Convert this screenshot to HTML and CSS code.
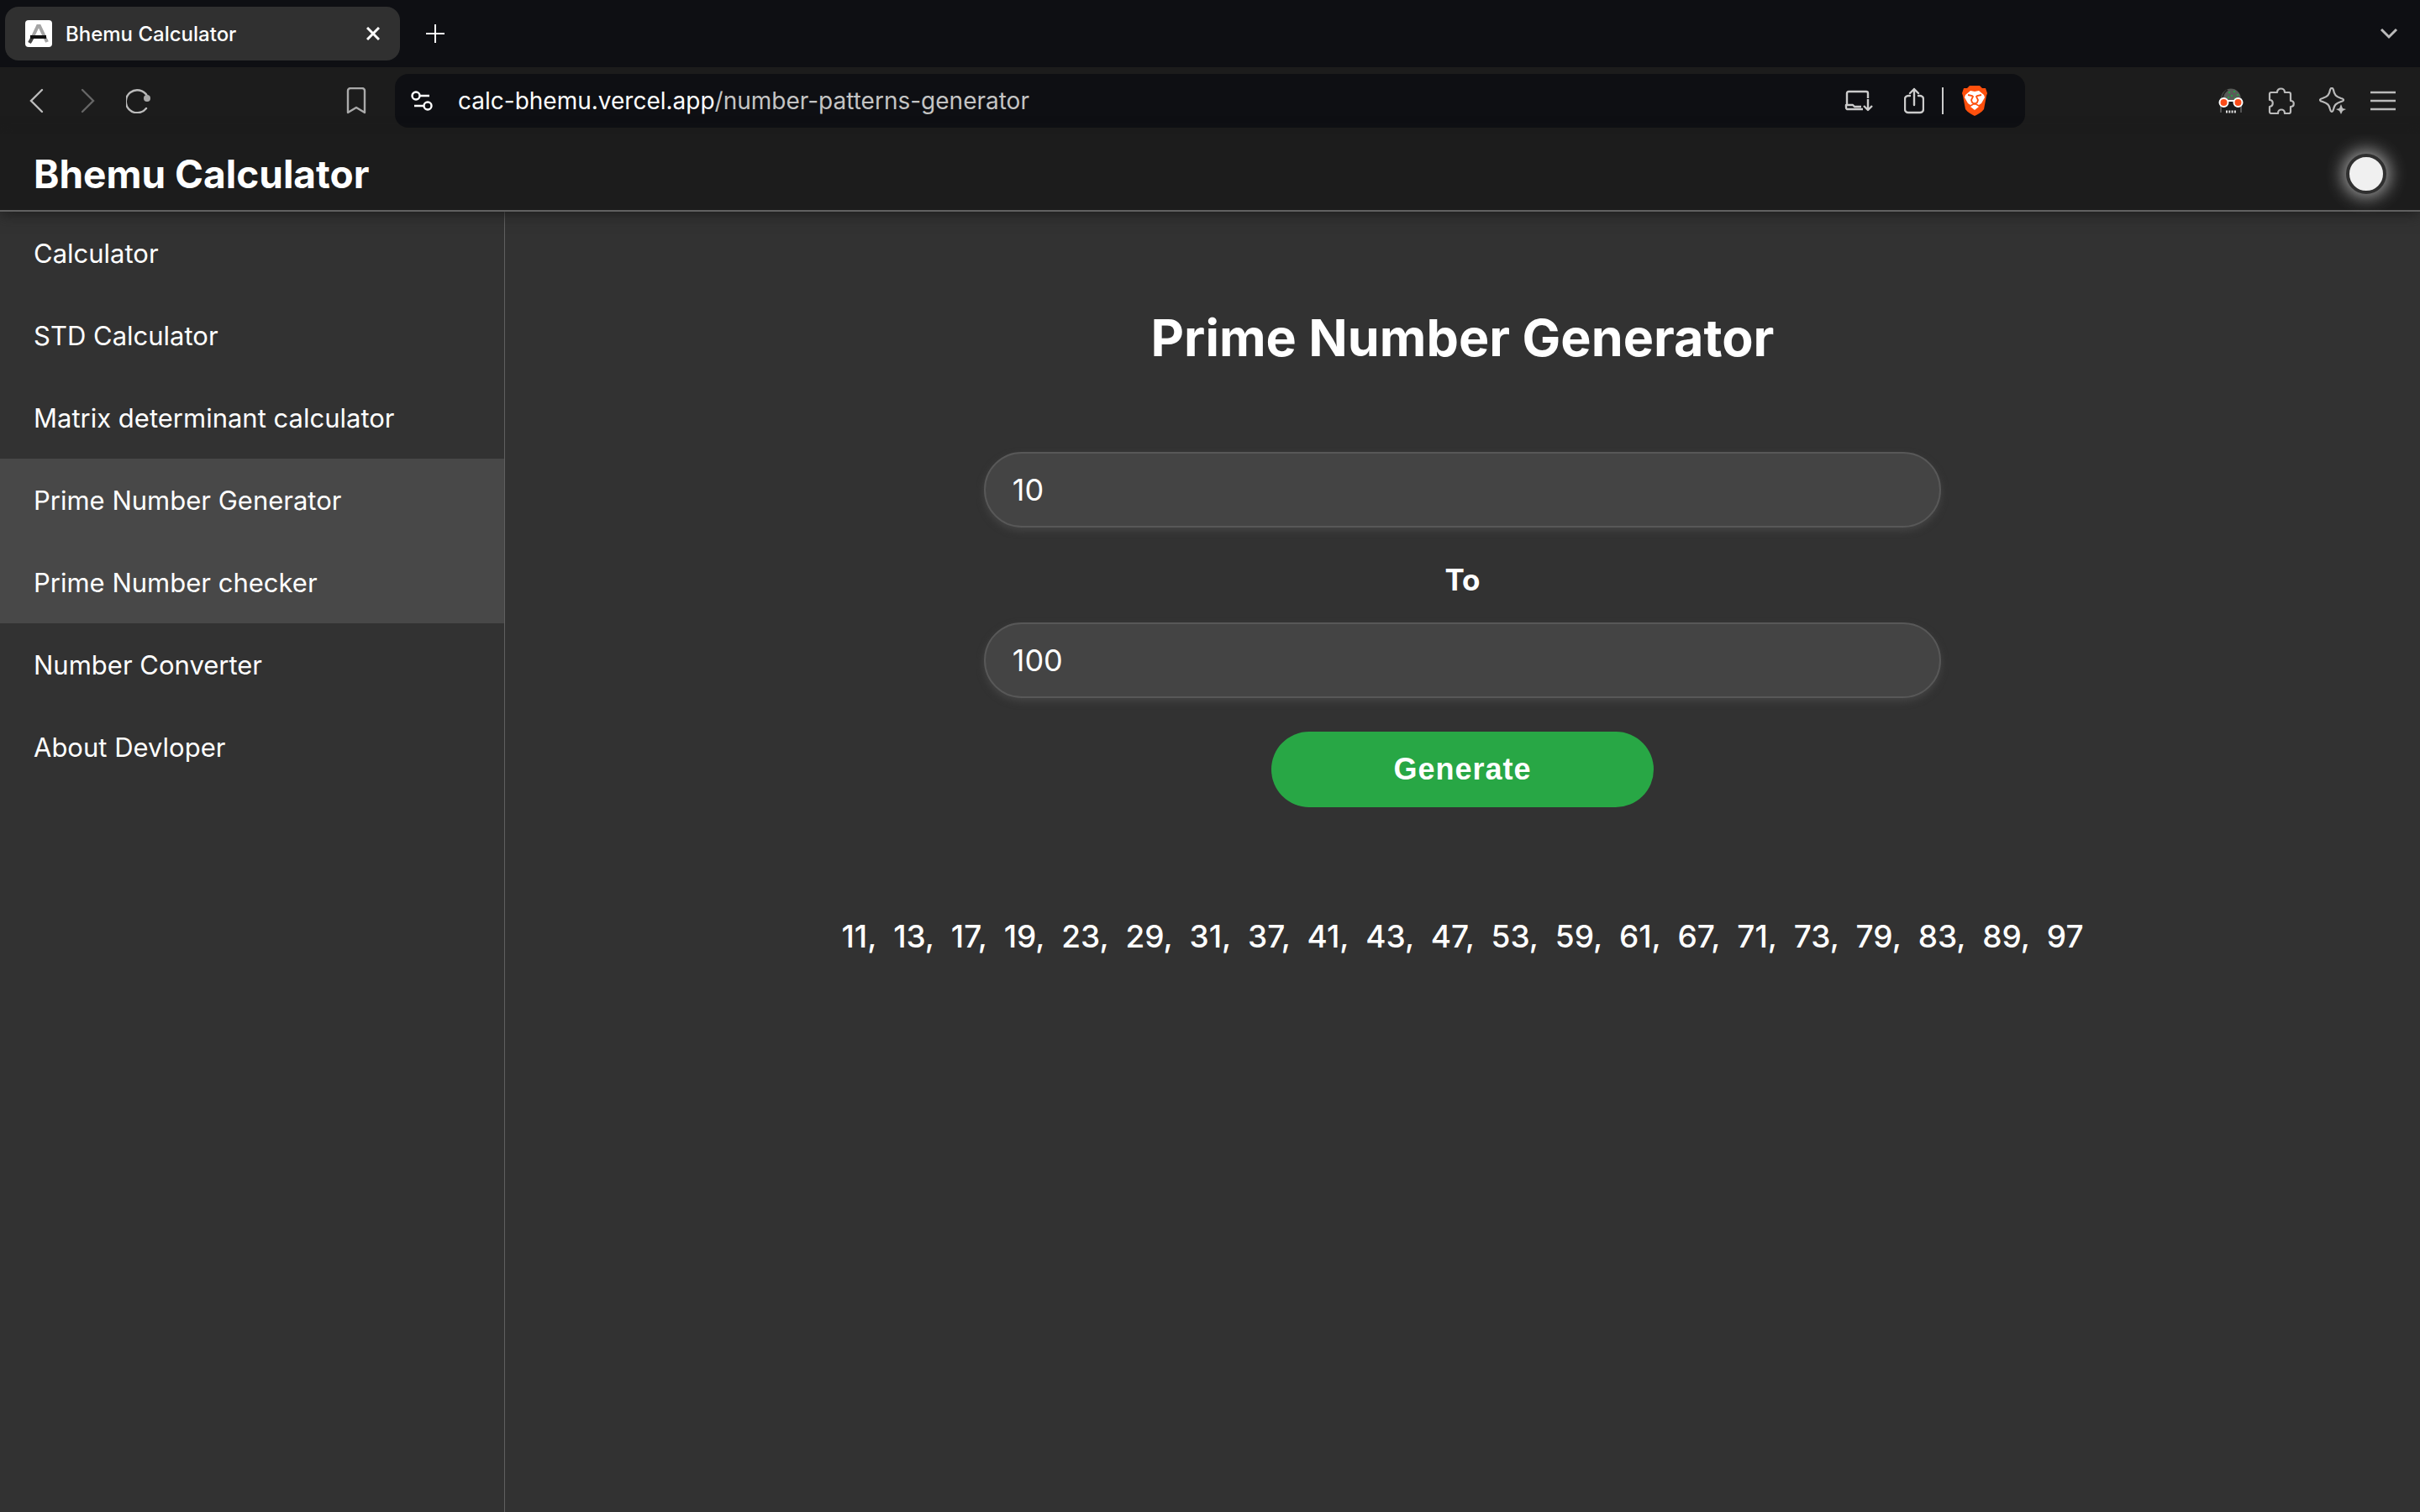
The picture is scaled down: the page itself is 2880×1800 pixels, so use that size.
FILE: index.html
```html
<!DOCTYPE html>
<html lang="en">
<head>
<meta charset="utf-8">
<title>Bhemu Calculator</title>
<link rel="stylesheet" href="styles.css">
</head>
<body>
<div class="tab-strip">
  <div class="tab">
    <svg class="favicon" width="32" height="32" viewBox="0 0 32 32" aria-hidden="true">
      <rect width="32" height="32" rx="4" fill="#fff"/>
      <path d="M6 26 15 7h2l9 19" fill="none" stroke="#a4a4a4" stroke-width="4"/>
      <path d="M5 27 9 20" stroke="#444" stroke-width="4"/>
      <path d="M6 18h19v4H6z" fill="#111"/>
    </svg>
    <span class="tab-title">Bhemu Calculator</span>
    <button class="icon-button" aria-label="Close tab">
      <svg width="16" height="16" viewBox="0 0 16 16"><path d="m1 1 14 14M15 1 1 15" stroke="#fff" stroke-width="3"/></svg>
    </button>
  </div>
  <button class="icon-button new-tab" aria-label="New tab">
    <svg width="22" height="22" viewBox="0 0 22 22"><path d="M11 0v22M0 11h22" stroke="#fff" stroke-width="2"/></svg>
  </button>
  <button class="icon-button tab-search" aria-label="Search tabs">
    <svg width="22" height="14" viewBox="0 0 22 14"><path d="m2 2 9 9 9-9" fill="none" stroke="#bbb" stroke-width="3"/></svg>
  </button>
</div>

<div class="toolbar">
  <div class="toolbar-side">
    <button class="icon-button" aria-label="Back">
      <svg width="30" height="30" viewBox="0 0 30 30"><path d="M20 2 7 15l13 13" fill="none" stroke="#bbb" stroke-width="2.4" stroke-linecap="round"/></svg>
    </button>
    <button class="icon-button" aria-label="Forward">
      <svg width="30" height="30" viewBox="0 0 30 30"><path d="m8 2 13 13L8 28" fill="none" stroke="#666" stroke-width="2.4" stroke-linecap="round"/></svg>
    </button>
    <button class="icon-button" aria-label="Reload">
      <svg width="30" height="30" viewBox="0 0 30 30"><path d="M24 24A13.500 13.500 0 1 1 25 9" fill="none" stroke="#bbb" stroke-width="2.400" stroke-linecap="round"/><circle cx="25" cy="12" r="4" fill="#aaa"/></svg>
    </button>
    <button class="icon-button bookmark" aria-label="Bookmark this tab">
      <svg width="24" height="32" viewBox="0 0 24 32"><path d="M2 4a3 3 0 0 1 3-3h14a3 3 0 0 1 3 3v26l-10-6-10 6z" fill="none" stroke="#aaa" stroke-width="2.400" stroke-linejoin="round"/></svg>
    </button>
  </div>
  <div class="address-bar">
    <button class="icon-button" aria-label="Site settings">
      <svg width="26" height="26" viewBox="0 0 26 26" fill="none" stroke="#fff" stroke-width="2.400"><circle cx="6" cy="7" r="4.500"/><path d="M11 7h11M4 19h11"/><circle cx="20" cy="19" r="4.500"/></svg>
    </button>
    <span class="address">calc-bhemu.vercel.app<span class="address-path">/number-patterns-generator</span></span>
    <div class="address-actions">
      <button class="icon-button" aria-label="Install app">
        <svg width="34" height="28" viewBox="0 0 34 28" fill="none" stroke="#ccc" stroke-width="2.400"><path d="M3 19V5a2 2 0 0 1 2-2h21a2 2 0 0 1 2 2v6M22 24H3a2 2 0 0 1-1-2v-3h8l2 2h8M28 12v12M23 20l5 5 5-5" stroke-linejoin="round"/></svg>
      </button>
      <button class="icon-button share" aria-label="Share">
        <svg width="24" height="32" viewBox="0 0 24 32" fill="none" stroke="#ccc" stroke-width="2.400" stroke-linecap="round" stroke-linejoin="round"><path d="M7 10H5a4 4 0 0 0-4 4v12a4 4 0 0 0 4 4h14a4 4 0 0 0 4-4V14a4 4 0 0 0-4-4h-2M12 21V2M7 7l5-5 5 5"/></svg>
      </button>
      <span class="divider"></span>
      <button class="icon-button" aria-label="Brave Shields">
        <svg width="32" height="36" viewBox="0 0 32 36"><path d="M10 0h12l3 3h4l2 6-1 3-3 16c-3 4-7 6-11 8-4-2-8-4-11-8L2 12 1 9l2-6h4z" fill="#ff500d"/><path d="m16 7 5-1 6 5 1 3-4 7-3 2-5-3-5 3-3-2-4-7 1-3 6-5z" fill="#fff"/><path d="m16 22 5 3-5 4-5-4z" fill="#fff"/><path d="m8 11 5 1 1 1-2 4 1 3 3 2 3-2 1-3-2-4 1-1 5-1" fill="none" stroke="#ff500d" stroke-width="1.800"/></svg>
      </button>
    </div>
  </div>
  <div class="toolbar-side toolbar-end">
    <button class="icon-button" aria-label="Private search extension">
      <svg width="30" height="30" viewBox="0 0 30 30"><path d="M3 14C3-4 27-4 27 14z" fill="#585c58"/><path d="M3 12v17M27 12v17" stroke="#555" stroke-width="2"/><path d="M5 11C6 6 8 4 11 2" stroke="#222" stroke-width="2" fill="none"/><path d="M12 5h2M18 4h2M15 9h2M22 8h2M19 12h2M11 11h2" stroke="#2a9c45" stroke-width="2"/><circle cx="6.500" cy="17" r="5" fill="#fb4b18" stroke="#fff" stroke-width="2"/><circle cx="23.500" cy="17" r="5" fill="#fb4b18" stroke="#fff" stroke-width="2"/><path d="M11 15h8" stroke="#fff" stroke-width="2"/><path d="M9 28h12" stroke="#ddd" stroke-width="3" stroke-dasharray="2 1.300"/></svg>
    </button>
    <button class="icon-button" aria-label="Extensions">
      <svg width="32" height="32" viewBox="0 0 32 32"><path d="M2 8a2 2 0 0 1 2-2h7c0-6 9-6 9 0h5a2 2 0 0 1 2 2v8c5 0 5 7 0 7v6a2 2 0 0 1-2 2h-5c0-6-8-6-8 0H4a2 2 0 0 1-2-2v-6c5-1 5-8 0-8z" fill="none" stroke="#bbb" stroke-width="2.200" stroke-linejoin="round"/></svg>
    </button>
    <button class="icon-button" aria-label="Leo AI">
      <svg width="32" height="32" viewBox="0 0 32 32"><path d="M13 3c1-3 3-3 4 0 1 6 3 8 9 10 4 1 4 3 0 4-6 2-8 4-9 9-1 4-3 4-4 0-1-5-3-7-9-9-4-1-4-3 0-4 6-2 8-4 9-10z" fill="none" stroke="#bbb" stroke-width="2.200"/><path d="m26 20 2 5 4 1-4 2-2 4-2-4-4-2 4-1z" fill="#bbb"/></svg>
    </button>
    <button class="icon-button" aria-label="Menu">
      <svg width="30" height="30" viewBox="0 0 30 30"><path d="M0 5h30M0 15h30M0 25h30" stroke="#bbb" stroke-width="2.400"/></svg>
    </button>
  </div>
</div>

<header class="app-header">
  <h1 class="brand">Bhemu Calculator</h1>
  <button class="theme-toggle" aria-label="Toggle theme"></button>
</header>

<div class="layout">
  <nav class="sidebar">
    <a class="nav-link" href="#calculator">Calculator</a>
    <a class="nav-link" href="#std">STD Calculator</a>
    <a class="nav-link" href="#matrix">Matrix determinant calculator</a>
    <a class="nav-link active" href="#prime-generator">Prime Number Generator</a>
    <a class="nav-link active" href="#prime-checker">Prime Number checker</a>
    <a class="nav-link" href="#converter">Number Converter</a>
    <a class="nav-link" href="#about">About Devloper</a>
  </nav>
  <main class="content">
    <h2 class="title">Prime Number Generator</h2>
    <form class="range-form">
      <input class="field" type="text" value="10" aria-label="From">
      <label class="to-label" for="range-end">To</label>
      <input class="field" id="range-end" type="text" value="100">
      <button class="generate" type="button">Generate</button>
    </form>
    <p class="results">11,&nbsp; 13,&nbsp; 17,&nbsp; 19,&nbsp; 23,&nbsp; 29,&nbsp; 31,&nbsp; 37,&nbsp; 41,&nbsp; 43,&nbsp; 47,&nbsp; 53,&nbsp; 59,&nbsp; 61,&nbsp; 67,&nbsp; 71,&nbsp; 73,&nbsp; 79,&nbsp; 83,&nbsp; 89,&nbsp; 97</p>
  </main>
</div>
</body>
</html>
```

FILE: styles.css
```css
* {
  box-sizing: border-box;
}

body {
  margin: 0;
  min-height: 100vh;
  display: flex;
  flex-direction: column;
  background: #323232;
  color: #fff;
  font-family: Inter, "Liberation Sans", sans-serif;
  font-size: 31px;
}

svg {
  display: block;
}

.icon-button {
  padding: 0;
  border: 0;
  background: none;
}

/* Browser chrome */
.tab-strip {
  display: flex;
  align-items: center;
  height: 80px;
  padding: 0 26px 0 6px;
  background: #0e0f13;
}

.tab {
  display: flex;
  align-items: center;
  gap: 16px;
  width: 470px;
  height: 64px;
  padding: 0 24px;
  border-radius: 16px;
  background: #303030;
}

.tab-title {
  flex: 1;
  font-size: 24px;
  font-weight: 500;
}

.new-tab {
  margin-left: 31px;
}

.tab-search {
  margin-left: auto;
}

.toolbar {
  display: flex;
  align-items: center;
  height: 80px;
  background: #1c1c1c;
}

.toolbar-side {
  display: flex;
  align-items: center;
  gap: 30px;
  width: 470px;
  padding: 0 34px 0 30px;
}

.bookmark {
  margin-left: auto;
}

.toolbar-end {
  justify-content: flex-end;
  gap: 29px;
  padding: 0 29px;
}

.address-bar {
  display: flex;
  flex: 1;
  align-items: center;
  gap: 30px;
  height: 64px;
  padding: 0 44px 0 19px;
  border-radius: 16px;
  background: #0e0f13;
}

.address {
  flex: 1;
  font-size: 28px;
}

.address-path {
  color: #c4c4c4;
}

.address-actions {
  display: flex;
  align-items: center;
  gap: 21px;
}

.share {
  margin-left: 16px;
}

.divider {
  width: 2px;
  height: 32px;
  background: #ccc;
}

/* Application */
.app-header {
  position: relative;
  display: flex;
  align-items: center;
  justify-content: space-between;
  height: 92px;
  padding: 3px 40px 0;
  border-bottom: 2px solid #606060;
  background: #1c1c1c;
  box-shadow: 0 2px 16px #1c1c1c;
}

.brand {
  margin: 0;
  font-size: 46px;
  font-weight: 700;
  line-height: 56px;
}

.theme-toggle {
  width: 48px;
  height: 48px;
  border: 4px solid #303030;
  border-radius: 50%;
  background: #f0f0f0;
  box-shadow: 0 0 20px 4px #a0a0a0;
}

.layout {
  display: flex;
  flex: 1;
}

.sidebar {
  width: 601px;
  border-right: 1px solid #606060;
}

.nav-link {
  display: block;
  padding: 2px 40px 0;
  color: #fff;
  line-height: 96px;
  text-decoration: none;
}

.nav-link.active {
  background: #484848;
}

.content {
  flex: 1;
  padding: 112px 0;
  text-align: center;
}

.title {
  margin: 0 0 98px;
  font-size: 61px;
  font-weight: 700;
  line-height: 76px;
}

.range-form {
  display: flex;
  flex-direction: column;
  align-items: center;
}

.field {
  width: 50%;
  height: 90px;
  padding: 0 32px;
  border: 2px solid #585858;
  border-radius: 45px;
  background: #444;
  color: #fff;
  font: inherit;
  font-size: 36px;
  box-shadow: 0 4px 8px #444;
}

.to-label {
  margin: 40px 0 29px;
  font-size: 35px;
  font-weight: 700;
  line-height: 44px;
}

.generate {
  width: 20%;
  height: 90px;
  margin-top: 40px;
  border: 0;
  border-radius: 45px;
  background: #28a745;
  color: #fff;
  font: bold 36px "Liberation Sans", sans-serif;
  letter-spacing: 1px;
}

.results {
  margin: 130px 0 0;
  font-size: 37px;
  font-weight: 500;
  line-height: 48px;
}
```
